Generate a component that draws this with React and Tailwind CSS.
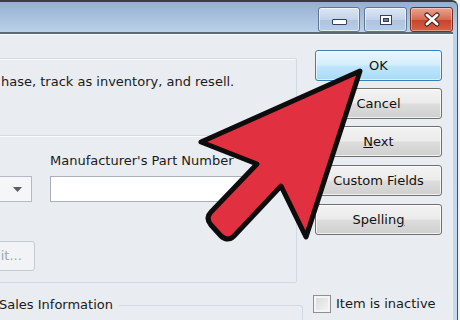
import React from 'react';

const BTN =
  'w-[127px] h-[31px] flex items-center justify-center rounded-[3px] border border-[#707070] text-[#111] shadow-[inset_0_0_0_1px_rgba(255,255,255,0.7)] bg-[linear-gradient(#f3f3f3,#ebebeb_48%,#dddddd_52%,#cfcfcf)]';

function CaptionButtons() {
  return (
    <div className="flex justify-end items-start pt-[5px] pr-[4px]">
      {/* minimize */}
      <div className="w-[42px] h-[25px] flex items-end justify-center pb-[6px] rounded-[3px] border border-[#5f7695] shadow-[inset_0_0_0_1px_rgba(255,255,255,0.55)] bg-[linear-gradient(#dbe6f3,#c3d4e9_50%,#aec4de_52%,#b8cde6)]">
        <div className="w-[15px] h-[6px] bg-white border border-[#33425a] rounded-[1px]" />
      </div>
      {/* maximize */}
      <div className="ml-[4px] w-[43px] h-[25px] flex items-center justify-center rounded-[3px] border border-[#5f7695] shadow-[inset_0_0_0_1px_rgba(255,255,255,0.55)] bg-[linear-gradient(#dbe6f3,#c3d4e9_50%,#aec4de_52%,#b8cde6)]">
        <div className="w-[12px] h-[10px] bg-white border border-[#33425a] p-[2px]">
          <div className="w-full h-full bg-[#6f7f96] border border-[#33425a]" />
        </div>
      </div>
      {/* close */}
      <div className="ml-[3px] w-[43px] h-[25px] flex items-center justify-center rounded-[3px] border border-[#7d2d20] shadow-[inset_0_0_0_1px_rgba(255,255,255,0.35)] bg-[linear-gradient(#e9a593,#d66b52_50%,#c5432b_52%,#d2644a)]">
        <svg width="18" height="15" viewBox="0 0 18 15">
          <path d="M4 3 L14 12 M14 3 L4 12" stroke="#4a1a12" strokeWidth="5" strokeLinecap="round" />
          <path d="M4 3 L14 12 M14 3 L4 12" stroke="#ffffff" strokeWidth="3" strokeLinecap="round" />
        </svg>
      </div>
    </div>
  );
}

function RedArrow() {
  return (
    <svg className="absolute inset-0 pointer-events-none" width="460" height="320" viewBox="0 0 460 320">
      <path
        d="M360 71 L306 237 L281 186 L234 236 Q228 242 221 236 L211 225 Q205 218 211 212 L257 164 L201 142 Z"
        fill="#e1303f"
        stroke="#0d0d0d"
        strokeWidth="5"
        strokeLinejoin="round"
      />
    </svg>
  );
}

export default function App() {
  return (
    <div className="relative w-[460px] h-[320px] overflow-hidden bg-[#f2f2f2] font-['DejaVu_Sans',sans-serif] text-[13px] leading-[16px] text-[#1b1b1b]">
      {/* window */}
      <div className="w-[458px] h-full flex flex-col border-t-2 border-t-[#3c3c3c] border-r border-r-[#3e526b] rounded-tr-[6px] bg-[linear-gradient(#96afd1,#bcd4eb_10%,#c6d9ee)]">
        <div className="h-[32px]">
          <CaptionButtons />
        </div>

        {/* client area */}
        <div className="flex-1 mr-[4px] flex border-t-2 border-[#5c6873] bg-[#e9ecf0] shadow-[inset_0_1px_0_#f6f8fb]">
          {/* left column */}
          <div className="w-[303px] overflow-hidden flex flex-col">
            <div className="mt-[24px] -ml-[12px] w-[309px] border border-[#d3d9e0] rounded-[2px] shadow-[inset_1px_1px_0_#fbfcfd]">
              <div className="h-[76px] pl-[12px] pt-[15px]">
                <p>hase, track as inventory, and resell.</p>
              </div>
              <div className="border-t border-[#d6dbe2] shadow-[inset_0_1px_0_#fbfcfd] pl-[12px] pt-[17px] pb-[11px]">
                <div className="flex items-end">
                  <div className="-ml-[20px] w-[51px] h-[26px] flex items-center justify-end pr-[9px] border border-[#b3bac3] bg-[#f5f6f8]">
                    <svg width="9" height="5" viewBox="0 0 9 5">
                      <path d="M0 0 L9 0 L4.5 5 Z" fill="#5a5f66" />
                    </svg>
                  </div>
                  <div className="ml-[18px] flex flex-col">
                    <span>Manufacturer's Part Number</span>
                    <div className="mt-[7px] w-[212px] h-[26px] bg-white border border-[#abb1b9]" />
                  </div>
                </div>
                <div className="mt-[39px] -ml-[30px] w-[64px] h-[30px] flex items-center justify-center rounded-[3px] border border-[#c5cbd2] bg-[#f2f3f5] text-[#a0a6ad]">
                  Edit...
                </div>
              </div>
            </div>

            <div className="mt-[14px] flex items-start h-[40px]">
              <span className="-ml-[1px]">Sales Information</span>
              <div className="ml-[6px] mt-[8px] flex-1 h-full border-t border-r border-[#d3d9e0] rounded-tr-[3px]" />
            </div>
          </div>

          {/* right column */}
          <div className="w-[150px] flex flex-col pt-[16px] pl-[12px]">
            <div className="w-[127px] h-[31px] flex items-center justify-center rounded-[3px] border border-[#3c7fb1] text-[#111] shadow-[inset_0_0_0_1px_rgba(255,255,255,0.6)] bg-[linear-gradient(#eaf6fd,#d4eefc_48%,#bee6fd_52%,#a9daf6)]">
              OK
            </div>
            <div className={`mt-[7px] ${BTN}`}>Cancel</div>
            <div className={`mt-[7px] ${BTN}`}>
              <span><span className="underline">N</span>ext</span>
            </div>
            <div className={`mt-[8px] ${BTN}`}>Custom Fields</div>
            <div className={`mt-[8px] ${BTN}`}>
              <span>Spellin<span className="underline">g</span></span>
            </div>
            <div className="mt-[60px] -ml-[2px] flex items-center">
              <div className="w-[18px] h-[18px] border border-[#8e8f8f] bg-[linear-gradient(135deg,#d8d8d8,#f6f6f6)] shadow-[inset_0_0_0_2px_#f4f4f4]" />
              <span className="ml-[5px]">Item is inactive</span>
            </div>
          </div>
        </div>
      </div>

      <RedArrow />
    </div>
  );
}
